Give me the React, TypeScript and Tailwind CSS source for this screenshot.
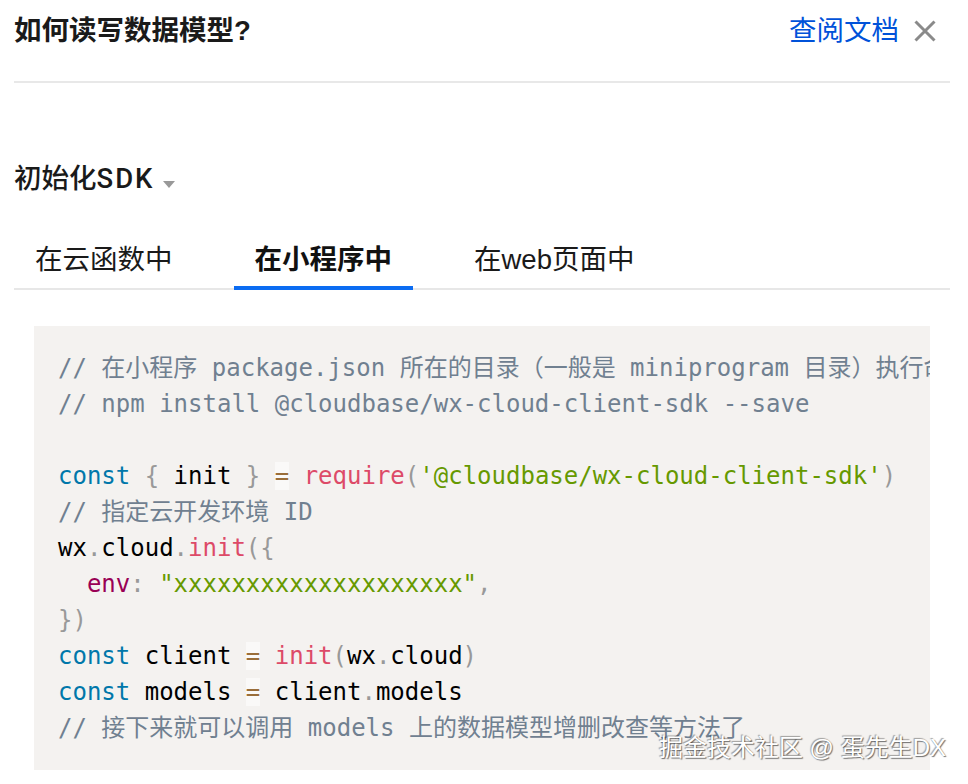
import React from "react";

const C = {
  comment: "text-[#708090]",
  kw: "text-[#0077aa]",
  fn: "text-[#dd4a68]",
  str: "text-[#669900]",
  punct: "text-[#999999]",
  op: "text-[#9a6e3a] bg-white/50",
  prop: "text-[#990055]",
};

type Tok = [string, string];

const lines: Tok[][] = [
  [[C.comment, "// 在小程序 package.json 所在的目录（一般是 miniprogram 目录）执行命令："]],
  [[C.comment, "// npm install @cloudbase/wx-cloud-client-sdk --save"]],
  [],
  [
    [C.kw, "const"],
    ["", " "],
    [C.punct, "{"],
    ["", " init "],
    [C.punct, "}"],
    ["", " "],
    [C.op, "="],
    ["", " "],
    [C.fn, "require"],
    [C.punct, "("],
    [C.str, "'@cloudbase/wx-cloud-client-sdk'"],
    [C.punct, ")"],
  ],
  [[C.comment, "// 指定云开发环境 ID"]],
  [
    ["", "wx"],
    [C.punct, "."],
    ["", "cloud"],
    [C.punct, "."],
    [C.fn, "init"],
    [C.punct, "({"],
  ],
  [
    ["", "  "],
    [C.prop, "env"],
    [C.punct, ":"],
    ["", " "],
    [C.str, '"xxxxxxxxxxxxxxxxxxxx"'],
    [C.punct, ","],
  ],
  [[C.punct, "})"]],
  [
    [C.kw, "const"],
    ["", " client "],
    [C.op, "="],
    ["", " "],
    [C.fn, "init"],
    [C.punct, "("],
    ["", "wx"],
    [C.punct, "."],
    ["", "cloud"],
    [C.punct, ")"],
  ],
  [
    [C.kw, "const"],
    ["", " models "],
    [C.op, "="],
    ["", " client"],
    [C.punct, "."],
    ["", "models"],
  ],
  [[C.comment, "// 接下来就可以调用 models 上的数据模型增删改查等方法了"]],
];

export default function App() {
  return (
    <div
      className="relative h-[784px] w-[968px] overflow-hidden bg-white pl-[14px] pr-[18px] text-[#1a1a1a]"
      style={{ fontFamily: '"Liberation Sans", "Noto Sans CJK SC", sans-serif' }}
    >
      {/* Header */}
      <div className="flex h-[61px] items-center justify-between pr-[14px]">
        <div className="text-[27.5px] font-bold leading-none text-[#1a1a1a]">如何读写数据模型?</div>
        <div className="flex items-center">
          <span className="text-[27.5px] leading-none text-[#0052d9]">查阅文档</span>
          <svg className="ml-[15px]" width="22" height="22" viewBox="0 0 22 22">
            <path d="M1.5 1.5 L20.5 20.5 M20.5 1.5 L1.5 20.5" stroke="#8a8a8a" strokeWidth="3" strokeLinecap="butt" />
          </svg>
        </div>
      </div>
      <div className="mt-[20px] h-[2px] bg-[#e8e8e8]" />

      {/* Section title */}
      <div className="mt-[76px] flex h-[40px] items-center">
        <span
          className="text-[27.5px] font-medium leading-none text-[#1a1a1a]"
          style={{ fontFamily: 'Roboto, "Noto Sans CJK SC", sans-serif' }}
        >
          初始化<span className="tracking-[2px]">SDK</span>
        </span>
        <svg className="ml-[9px] mt-[10px]" width="12" height="7" viewBox="0 0 12 7">
          <path d="M0 0 L12 0 L6 7 Z" fill="#999999" />
        </svg>
      </div>

      {/* Tabs */}
      <div className="mt-[41px] flex gap-[40px] border-b-2 border-[#e7e7e7]">
        <div className="-mb-[2px] border-b-4 border-transparent px-[21px] pb-[6px]">
          <div className="flex h-[40px] items-center text-[27.5px] leading-none text-[#1a1a1a]">在云函数中</div>
        </div>
        <div className="-mb-[2px] border-b-4 border-[#0b6cf2] px-[21px] pb-[6px]">
          <div className="flex h-[40px] items-center text-[27.5px] font-bold leading-none text-[#111111]">在小程序中</div>
        </div>
        <div className="-mb-[2px] border-b-4 border-transparent px-[21px] pb-[6px]">
          <div className="flex h-[40px] items-center text-[27.5px] leading-none text-[#1a1a1a]">在web页面中</div>
        </div>
      </div>

      {/* Code */}
      <div
        className="mx-[20px] mt-[36px] overflow-hidden bg-[#f4f2f0] py-[24px] pl-[24px] text-[24px] leading-[36px] text-black"
        style={{ fontFamily: '"DejaVu Sans Mono", "Noto Sans CJK SC", monospace' }}
      >
        {lines.map((toks, i) => (
          <div key={i} className="h-[36px] whitespace-pre">
            {toks.map(([cls, t], j) => (
              <span key={j} className={cls}>
                {t}
              </span>
            ))}
          </div>
        ))}
      </div>

      {/* Watermark */}
      <div
        className="absolute bottom-[24px] right-[22px] text-[24px] leading-none text-white [text-shadow:1px_1px_1px_rgba(0,0,0,0.55),-1px_-1px_1px_rgba(0,0,0,0.35)]"
        style={{ fontFamily: '"Liberation Sans", "Noto Sans CJK SC", sans-serif' }}
      >
        掘金技术社区 @ 蛋先生DX
      </div>
    </div>
  );
}
